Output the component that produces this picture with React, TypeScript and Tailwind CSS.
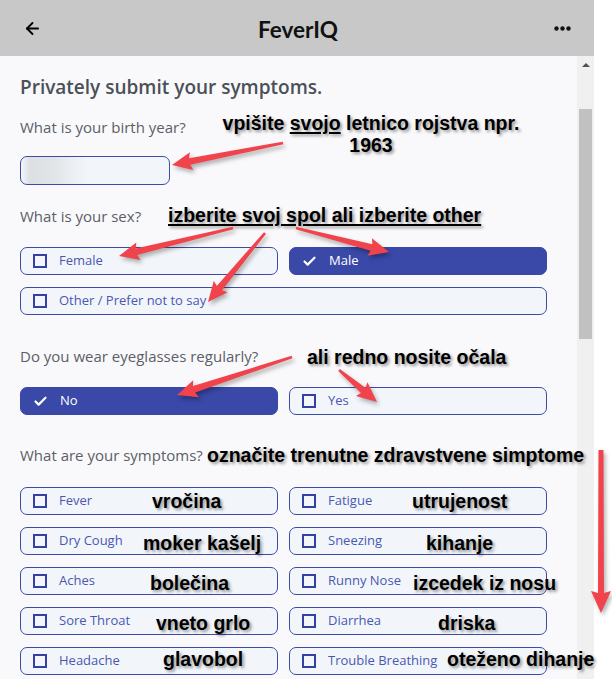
import { ArrowLeft, Check } from "lucide-react";

type Pt = [number, number];

// tapering arrow from tail to tip, returned as polygon points
function arrowPoints(tail: Pt, tip: Pt, head = 18, headW = 9, tailW = 1.3, neckW = 3.4) {
  const [x1, y1] = tail;
  const [x2, y2] = tip;
  const len = Math.hypot(x2 - x1, y2 - y1);
  const ux = (x2 - x1) / len;
  const uy = (y2 - y1) / len;
  const nx = -uy;
  const ny = ux;
  const bx = x2 - ux * head;
  const by = y2 - uy * head;
  const pts: Pt[] = [
    [x1 + nx * tailW, y1 + ny * tailW],
    [bx + nx * neckW, by + ny * neckW],
    [bx + nx * headW - ux * 2, by + ny * headW - uy * 2],
    [x2, y2],
    [bx - nx * headW - ux * 2, by - ny * headW - uy * 2],
    [bx - nx * neckW, by - ny * neckW],
    [x1 - nx * tailW, y1 - ny * tailW],
  ];
  return pts.map((p) => p.map((v) => v.toFixed(1)).join(",")).join(" ");
}

const arrows: { tail: Pt; tip: Pt; thick?: boolean }[] = [
  { tail: [283, 143], tip: [172, 165] },
  { tail: [233, 228], tip: [119, 256] },
  { tail: [265, 233], tip: [208, 302] },
  { tail: [296, 228], tip: [389, 252] },
  { tail: [292, 357], tip: [177, 395] },
  { tail: [339, 370], tip: [377, 402] },
  { tail: [601, 450], tip: [601, 613], thick: true },
];

const symptoms = [
  "Fever",
  "Fatigue",
  "Dry Cough",
  "Sneezing",
  "Aches",
  "Runny Nose",
  "Sore Throat",
  "Diarrhea",
  "Headache",
  "Trouble Breathing",
];

const notes: { text: string; left: number; top: number }[] = [
  { text: "vročina", left: 152, top: 490 },
  { text: "utrujenost", left: 412, top: 490 },
  { text: "moker kašelj", left: 143, top: 532 },
  { text: "kihanje", left: 426, top: 532 },
  { text: "bolečina", left: 150, top: 572 },
  { text: "izcedek iz nosu", left: 413, top: 572 },
  { text: "vneto grlo", left: 156, top: 612 },
  { text: "driska", left: 438, top: 612 },
  { text: "glavobol", left: 163, top: 648 },
  { text: "oteženo dihanje", left: 447, top: 648 },
];

function Option({ label, checked = false, wide = false }: { label: string; checked?: boolean; wide?: boolean }) {
  return (
    <div
      className={
        checked
          ? "h-7 rounded-[7px] border border-[#3a48a8] bg-[#3a48a8] flex items-center pl-3 gap-3 text-white"
          : "h-7 rounded-[7px] border border-[#3d4ba9] bg-[#f2f6fa] flex items-center pl-3 gap-3 text-[#4a56b3]" +
            (wide ? " col-span-2" : "")
      }
    >
      {checked ? (
        <Check size={15} strokeWidth={3.5} className="text-white shrink-0" />
      ) : (
        <span className="block w-[14px] h-[14px] border-2 border-[#3341a6] shrink-0" />
      )}
      <span className={checked ? "text-[13px] font-medium" : "text-[13px] font-normal"}>{label}</span>
    </div>
  );
}

const note = "absolute font-['Liberation_Sans',Arial,sans-serif] font-bold text-[19.5px] leading-[22px] text-black whitespace-nowrap [text-shadow:2px_2px_3px_rgba(0,0,0,0.4)]";

export default function App() {
  return (
    <div className="relative w-[612px] h-[679px] bg-white flex overflow-hidden font-['Open_Sans',sans-serif]">
      <div className="w-[594px] flex flex-col">
        {/* Header */}
        <div className="h-14 bg-[#c8c8c8] flex items-center justify-between pl-[23px] pr-[23px] shrink-0">
          <ArrowLeft size={19} strokeWidth={2.4} className="text-black" />
          <span className="font-['Lato',sans-serif] font-bold text-[22.5px] text-[#111] mt-1">FeverIQ</span>
          <svg width="17" height="5" viewBox="0 0 17 5">
            <circle cx="2.5" cy="2.5" r="2.2" fill="#111" />
            <circle cx="8.5" cy="2.5" r="2.2" fill="#111" />
            <circle cx="14.5" cy="2.5" r="2.2" fill="#111" />
          </svg>
        </div>

        <div className="flex flex-1 min-h-0">
          {/* Form */}
          <div className="flex-1 bg-[#f9f9fb] pl-5 pt-[19px] overflow-hidden">
            <h1 className="text-[19px] leading-6 font-semibold text-[#4b5058]">Privately submit your symptoms.</h1>

            <p className="mt-[18px] text-[15px] leading-5 text-[#5b6067]">What is your birth year?</p>
            <div className="mt-[19px] w-[150px] h-[29px] rounded-[7px] border border-[#3d4ba9] bg-[linear-gradient(90deg,#f2f6fa_0%,#dde0e3_6%,#e2e5e8_22%,#f2f6fa_45%)]" />

            <p className="mt-[21px] text-[15px] leading-5 text-[#5b6067]">What is your sex?</p>
            <div className="mt-[21px] w-[527px] grid grid-cols-2 gap-x-[11px] gap-y-3">
              <Option label="Female" />
              <Option label="Male" checked />
              <Option label="Other / Prefer not to say" wide />
            </div>

            <p className="mt-[31px] text-[15px] leading-5 text-[#5b6067]">Do you wear eyeglasses regularly?</p>
            <div className="mt-[21px] w-[527px] grid grid-cols-2 gap-x-[11px]">
              <Option label="No" checked />
              <Option label="Yes" />
            </div>

            <p className="mt-[30px] text-[15px] leading-5 text-[#5b6067]">What are your symptoms?</p>
            <div className="mt-[22px] w-[527px] grid grid-cols-2 gap-x-[11px] gap-y-3">
              {symptoms.map((s) => (
                <Option key={s} label={s} />
              ))}
            </div>
          </div>

          {/* Scrollbar */}
          <div className="w-[17px] bg-[#f0f0f0] flex flex-col items-center">
            <div className="h-[18px] flex items-center justify-center">
              <span className="w-0 h-0 border-x-[4px] border-x-transparent border-b-[4px] border-b-[#505050]" />
            </div>
            <div className="mt-[35px] w-[13px] h-[230px] bg-[#c1c1c1]" />
            <div className="flex-1" />
            <div className="h-[24px] flex items-start justify-center pt-[3px]">
              <span className="w-0 h-0 border-x-[4px] border-x-transparent border-t-[4px] border-t-[#505050]" />
            </div>
          </div>
        </div>
      </div>

      {/* Annotations */}
      <div className={note + " left-[222px] top-[112px] w-[298px] text-center"}>
        vpišite <span className="underline decoration-2 underline-offset-2">svojo</span> letnico rojstva npr.
        <br />
        1963
      </div>
      <div className={note + " left-[168px] top-[204px] underline decoration-2 underline-offset-2"}>
        izberite svoj spol ali izberite other
      </div>
      <div className={note + " left-[307px] top-[346px]"}>ali redno nosite očala</div>
      <div className={note + " left-[207px] top-[444px]"}>označite trenutne zdravstvene simptome</div>
      {notes.map((n) => (
        <div key={n.text} className={note} style={{ left: n.left, top: n.top }}>
          {n.text}
        </div>
      ))}

      <svg
        className="absolute inset-0 pointer-events-none drop-shadow-[2px_3px_2px_rgba(0,0,0,0.3)]"
        width="612"
        height="679"
      >
        {arrows.map((a, i) => (
          <polygon
            key={i}
            points={
              a.thick
                ? arrowPoints(a.tail, a.tip, 20, 10, 2.5, 3)
                : arrowPoints(a.tail, a.tip)
            }
            fill="#f0434b"
          />
        ))}
      </svg>
    </div>
  );
}
